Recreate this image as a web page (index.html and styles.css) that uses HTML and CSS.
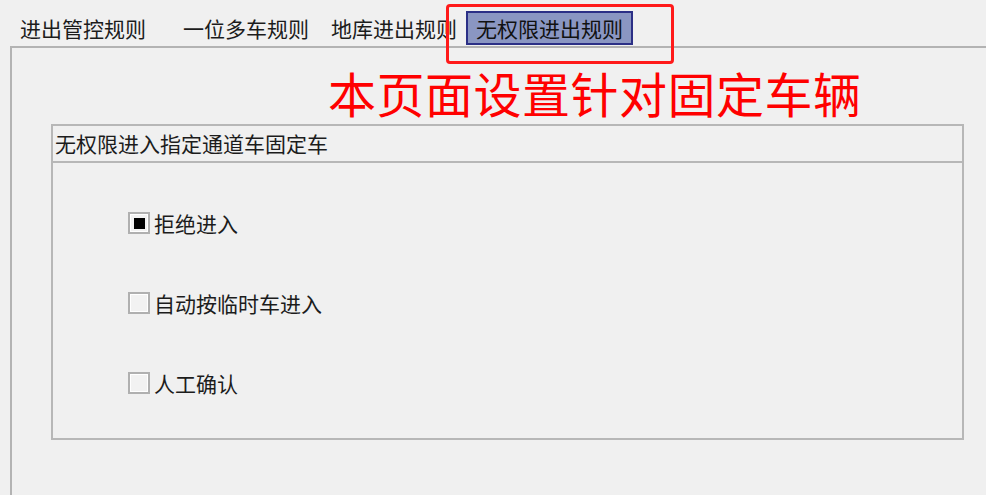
FILE: index.html
```html
<!DOCTYPE html>
<html lang="zh-CN">
<head>
<meta charset="utf-8">
<title>无权限进出规则</title>
<link rel="stylesheet" href="styles.css">
</head>
<body>
<div class="window">
  <div class="tabstrip">
    <span class="tab tab-1">进出管控规则</span>
    <span class="tab tab-2">一位多车规则</span>
    <span class="tab tab-3">地库进出规则</span>
    <span class="tab tab-4 tab-active">无权限进出规则</span>
  </div>
  <div class="highlight"></div>
  <div class="panel">
    <div class="annotation">本页面设置针对固定车辆</div>
    <div class="group">
      <div class="group-title">无权限进入指定通道车固定车</div>
      <div class="group-body">
        <div class="option">
          <span class="check checked"></span>
          <span class="label">拒绝进入</span>
        </div>
        <div class="option">
          <span class="check"></span>
          <span class="label">自动按临时车进入</span>
        </div>
        <div class="option">
          <span class="check"></span>
          <span class="label">人工确认</span>
        </div>
      </div>
    </div>
  </div>
</div>
</body>
</html>
```

FILE: styles.css
```css
html, body {
  margin: 0;
  padding: 0;
  background: #f0f0f0;
  overflow: hidden;
}

.window {
  position: relative;
  width: 986px;
  height: 495px;
  font-family: "Noto Sans CJK SC", "Noto Sans", sans-serif;
  color: #1c1c1c;
  font-size: 21px;
}

.tabstrip {
  display: flex;
  height: 46px;
  padding-left: 19px;
  box-sizing: border-box;
}

.tab {
  flex: none;
  margin-top: 11px;
  height: 34px;
  line-height: 32px;
  box-sizing: border-box;
  border: 1px solid transparent;
  white-space: nowrap;
  overflow: visible;
}

.tab-1 { width: 126px; }
.tab-2 { width: 124px; margin-left: 37px; }
.tab-3 { width: 123px; margin-left: 24px; }
.tab-4 { width: 167px; margin-left: 13px; }

.tab-active {
  background: #8a96c2;
  border: 2px solid #2b2f86;
  line-height: 30px;
  padding-left: 8px;
  color: #111;
}

.highlight {
  position: absolute;
  left: 446px;
  top: 4px;
  width: 228px;
  height: 60px;
  box-sizing: border-box;
  border: 3px solid #ff1a1a;
  border-radius: 4px;
}

.panel {
  margin-left: 10px;
  height: 449px;
  border-top: 2px solid #b3b3b3;
  border-left: 2px solid #b3b3b3;
  box-sizing: border-box;
}

.annotation {
  height: 76px;
  padding-left: 316px;
  font-size: 48px;
  line-height: 48px;
  padding-top: 20px;
  box-sizing: border-box;
  color: #ff0000;
  white-space: nowrap;
  letter-spacing: 0.5px;
}

.group {
  margin-left: 39px;
  width: 913px;
  border: 2px solid #b7b7b7;
  box-sizing: border-box;
}

.group-title {
  height: 37px;
  line-height: 34px;
  padding-left: 2px;
  border-bottom: 2px solid #b7b7b7;
  box-sizing: border-box;
  white-space: nowrap;
}

.group-body {
  display: flex;
  flex-direction: column;
  gap: 50px;
  padding: 45px 0 40px 75px;
}

.option {
  display: flex;
  align-items: center;
  height: 30px;
  gap: 4px;
}

.check {
  width: 22px;
  height: 22px;
  box-sizing: border-box;
  border: 2px solid #b0b0b0;
  box-shadow: inset 0 0 0 1px #ffffff;
  display: flex;
  align-items: center;
  justify-content: center;
  background: #f2f2f2;
}

.check.checked::after {
  content: "";
  width: 11px;
  height: 11px;
  background: #000;
}

.label {
  white-space: nowrap;
  line-height: 30px;
}
```
